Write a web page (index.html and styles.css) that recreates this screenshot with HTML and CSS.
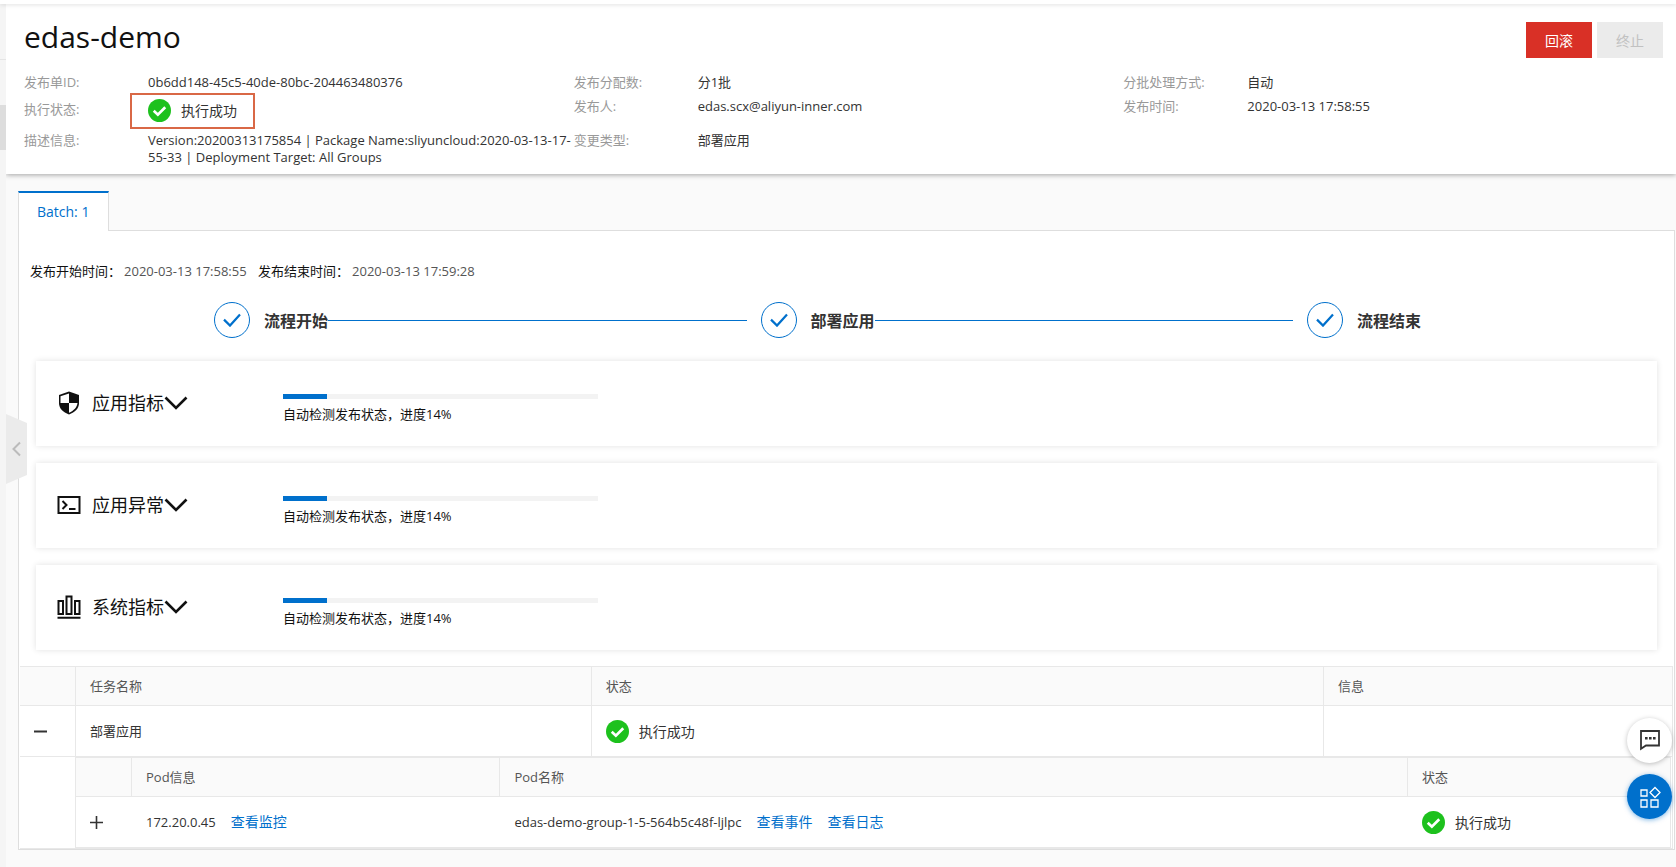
FILE: index.html
```
<!DOCTYPE html>
<html lang="zh-CN">
<head>
  <meta charset="UTF-8">
  <meta name="viewport" content="width=device-width, initial-scale=1.0">
  <title>edas-demo</title>
  <link rel="stylesheet" href="styles.css">
</head>
<body>
  <!-- shared icons -->
  <svg class="sprite" aria-hidden="true">
    <symbol id="icon-success" viewBox="0 0 24 24">
      <circle cx="12" cy="12" r="12" fill="#1dc11d"/>
      <path d="M6 12.2l4.3 4.2L18 8.6" fill="none" stroke="#fff" stroke-width="2.8"/>
    </symbol>
    <symbol id="icon-check" viewBox="0 0 18 14">
      <path d="M1 6.6l6 6L17 1.4" fill="none" stroke="#0070cc" stroke-width="2.2"/>
    </symbol>
    <symbol id="icon-down" viewBox="0 0 24 14">
      <path d="M1.5 1.5L12 12 22.5 1.5" fill="none" stroke="#111" stroke-width="2.6"/>
    </symbol>
  </svg>

  <div class="topbar"></div>
  <div class="layout">
    <aside class="rail">
      <div class="rail-head"></div>
      <div class="rail-active"></div>
      <button class="rail-toggle" aria-label="收起">
        <svg width="9" height="16" viewBox="0 0 9 16"><path d="M8 1.5L1.5 8 8 14.5" fill="none" stroke="#bbb" stroke-width="2"/></svg>
      </button>
    </aside>

    <main class="main">
      <header class="header">
        <div class="title-row">
          <h1>edas-demo</h1>
          <div class="actions">
            <button class="btn btn-danger">回滚</button>
            <button class="btn" disabled>终止</button>
          </div>
        </div>
        <dl class="info">
          <div class="item"><dt>发布单ID:</dt><dd>0b6dd148-45c5-40de-80bc-204463480376</dd></div>
          <div class="item"><dt>发布分配数:</dt><dd>分1批</dd></div>
          <div class="item"><dt>分批处理方式:</dt><dd>自动</dd></div>
          <div class="item item-status">
            <dt>执行状态:</dt>
            <dd><span class="status marked"><svg><use href="#icon-success"/></svg>执行成功</span></dd>
          </div>
          <div class="item"><dt>发布人:</dt><dd>edas.scx@aliyun-inner.com</dd></div>
          <div class="item"><dt>发布时间:</dt><dd>2020-03-13 17:58:55</dd></div>
          <div class="item"><dt>描述信息:</dt><dd>Version:20200313175854 | Package Name:sliyuncloud:2020-03-13-17-55-33 | Deployment Target: All Groups</dd></div>
          <div class="item"><dt>变更类型:</dt><dd>部署应用</dd></div>
        </dl>
      </header>

      <section class="content">
        <div class="tabs" role="tablist">
          <button class="tab" role="tab" aria-selected="true">Batch: 1</button>
        </div>
        <div class="panel">
          <p class="times">
            <span>发布开始时间：</span><time>2020-03-13 17:58:55</time>
            <span>发布结束时间：</span><time>2020-03-13 17:59:28</time>
          </p>

          <ol class="steps">
            <li class="step"><span class="step-icon"><svg><use href="#icon-check"/></svg></span><span class="step-name">流程开始</span></li>
            <li class="step"><span class="step-icon"><svg><use href="#icon-check"/></svg></span><span class="step-name">部署应用</span></li>
            <li class="step"><span class="step-icon"><svg><use href="#icon-check"/></svg></span><span class="step-name">流程结束</span></li>
          </ol>

          <div class="cards">
            <div class="card">
              <button class="card-title">
                <svg class="card-icon" viewBox="0 0 24 24">
                  <path d="M12 .5L22 4v8c0 5.500-4 9-10 11.500C6 21 2 17.500 2 12V4z" fill="#111"/>
                  <path d="M12 2.500v9.500H3.500V5.300zM12 12h8.500c-.5 4.500-3.500 7.500-8.500 9.800z" fill="#fff"/>
                </svg>
                应用指标<svg class="arrow"><use href="#icon-down"/></svg>
              </button>
              <div class="check">
                <div class="bar"><div class="bar-fill" style="width: 14%"></div></div>
                <p>自动检测发布状态，进度14%</p>
              </div>
            </div>
            <div class="card">
              <button class="card-title">
                <svg class="card-icon" viewBox="0 0 24 24" fill="none" stroke="#111" stroke-width="2">
                  <path d="M1.5 4h21v16h-21zM5.5 8l4 4-4 4M12 16h6.5"/>
                </svg>
                应用异常<svg class="arrow"><use href="#icon-down"/></svg>
              </button>
              <div class="check">
                <div class="bar"><div class="bar-fill" style="width: 14%"></div></div>
                <p>自动检测发布状态，进度14%</p>
              </div>
            </div>
            <div class="card">
              <button class="card-title">
                <svg class="card-icon" viewBox="0 0 24 24" fill="none" stroke="#111" stroke-width="2">
                  <path d="M1.5 6H6v13H1.5zM9.5 1.5h5V19h-5zM18 6h4.5v13H18zM.5 22.8h23"/>
                </svg>
                系统指标<svg class="arrow"><use href="#icon-down"/></svg>
              </button>
              <div class="check">
                <div class="bar"><div class="bar-fill" style="width: 14%"></div></div>
                <p>自动检测发布状态，进度14%</p>
              </div>
            </div>
          </div>

          <table class="table task-table">
            <colgroup><col class="col-toggle"><col class="col-task"><col class="col-status"><col></colgroup>
            <thead>
              <tr><th></th><th>任务名称</th><th>状态</th><th>信息</th></tr>
            </thead>
            <tbody>
              <tr>
                <td><button class="toggle" aria-label="收起"><svg viewBox="0 0 13 13"><path d="M0 6.5h13" stroke="#333" stroke-width="2"/></svg></button></td>
                <td>部署应用</td>
                <td><span class="status"><svg><use href="#icon-success"/></svg>执行成功</span></td>
                <td></td>
              </tr>
              <tr>
                <td></td>
                <td class="nested" colspan="3">
                  <table class="table pod-table">
                    <colgroup><col class="col-toggle"><col class="col-pod"><col class="col-name"><col></colgroup>
                    <thead>
                      <tr><th></th><th>Pod信息</th><th>Pod名称</th><th>状态</th></tr>
                    </thead>
                    <tbody>
                      <tr>
                        <td><button class="toggle" aria-label="展开"><svg viewBox="0 0 13 13"><path d="M0 6.5h13M6.5 0v13" stroke="#333" stroke-width="1.6"/></svg></button></td>
                        <td>172.20.0.45<a href="#">查看监控</a></td>
                        <td>edas-demo-group-1-5-564b5c48f-ljlpc<a href="#">查看事件</a><a href="#">查看日志</a></td>
                        <td><span class="status"><svg><use href="#icon-success"/></svg>执行成功</span></td>
                      </tr>
                    </tbody>
                  </table>
                </td>
              </tr>
            </tbody>
          </table>
        </div>
      </section>
    </main>
  </div>

  <div class="floats">
    <button class="float" aria-label="反馈">
      <svg width="22" height="24" viewBox="0 0 22 24">
        <path d="M2 2h18v14.500H7L2 19.800z" fill="none" stroke="#333" stroke-width="1.8"/>
        <path d="M6 8h2.600v2.600H6zM10 8h2.600v2.600H10zM14 8h2.600v2.600H14z" fill="#333"/>
      </svg>
    </button>
    <button class="float float-blue" aria-label="应用">
      <svg width="22" height="22" viewBox="0 0 22 22" fill="none" stroke="#fff" stroke-width="1.3">
        <path d="M2 4h6v6H2zM2 14h6v7H2zM12 14h7v7h-7zM16 1.5l5 5-5 5-5-5z"/>
      </svg>
    </button>
  </div>
</body>
</html>
```

FILE: styles.css
```
* {
  box-sizing: border-box;
}

body {
  margin: 0;
  min-height: 100vh;
  display: flex;
  flex-direction: column;
  font-family: "Open Sans", "Noto Sans CJK SC", sans-serif;
  font-size: 13px;
  line-height: 17px;
  color: #333;
  background-color: #fafafa;
}

h1, p, dl, dd, ol {
  margin: 0;
  padding: 0;
}

button {
  font: inherit;
  color: inherit;
  border: none;
  padding: 0;
  background: none;
  cursor: pointer;
}

a {
  font-size: 14px;
  color: #0070cc;
  text-decoration: none;
}

svg {
  flex: none;
}

.sprite {
  position: absolute;
  width: 0;
  height: 0;
}

.topbar {
  position: relative;
  z-index: 1;
  height: 4px;
  background-color: #fff;
  box-shadow: 0 1px 4px rgba(0, 0, 0, 0.12);
}

.layout {
  flex: 1;
  display: flex;
}

/* collapsed side menu */
.rail {
  position: relative;
  width: 6px;
  background-color: #f5f5f5;
}

.rail-head {
  height: 56px;
  margin-bottom: 45px;
  border-bottom: 1px solid #e5e5e5;
}

.rail-active {
  height: 45px;
  background-color: #ddd;
}

.rail-toggle {
  position: absolute;
  top: 410px;
  left: 6px;
  z-index: 1;
  display: flex;
  align-items: center;
  justify-content: center;
  width: 21px;
  height: 70px;
  background-color: #ebebeb;
  clip-path: polygon(0 0, 100% 13%, 100% 87%, 0 100%);
}

.main {
  flex: 1;
  min-width: 0;
}

/* header */
.header {
  padding: 12px 13px 8px 18px;
  background-color: #fff;
  box-shadow: 0 1px 5px rgba(0, 0, 0, 0.35);
}

.title-row {
  display: flex;
  justify-content: space-between;
  height: 58px;
}

h1 {
  font-size: 30px;
  line-height: 42px;
  font-weight: 400;
  color: #111;
}

.actions {
  display: flex;
  gap: 5px;
  padding-top: 6px;
}

.btn {
  width: 66px;
  height: 36px;
  font-size: 14px;
  color: #c1c1c1;
  background-color: #ebebeb;
}

.btn:disabled {
  cursor: not-allowed;
}

.btn-danger {
  color: #fff;
  background-color: #d93026;
}

.info {
  display: grid;
  grid-template-columns: repeat(3, 1fr);
  margin-right: -10px;
}

.item {
  display: flex;
  min-height: 24px;
}

.item dt {
  flex: none;
  width: 124px;
  color: #999;
}

.item-status {
  height: 34px;
  line-height: 23px;
}

.status {
  display: inline-flex;
  align-items: center;
  gap: 10px;
  font-size: 14px;
  vertical-align: middle;
}

.status svg {
  width: 23px;
  height: 23px;
}

.marked {
  position: relative;
}

.marked::after {
  content: "";
  position: absolute;
  inset: -6px -18px -7px;
  border: 2px solid #d96846;
}

/* tabs */
.content {
  padding: 17px 1px 17px 12px;
}

.tabs {
  display: flex;
}

.tab {
  height: 40px;
  margin-bottom: -1px;
  padding: 0 19px 2px 18px;
  font-size: 14px;
  color: #0070cc;
  background-color: #fff;
  border: 1px solid #dedede;
  border-top: 2px solid #0070cc;
  border-bottom: none;
  z-index: 1;
}

.panel {
  padding-top: 32px;
  background-color: #fff;
  border: 1px solid #dedede;
}

.times {
  padding: 0 11px;
  color: #111;
}

.times time {
  margin: 0 8px 0 3px;
  color: #555;
}

/* steps */
.steps {
  display: flex;
  padding: 22px 253px 23px 195px;
  list-style: none;
}

.step {
  display: flex;
  align-items: center;
}

.step:not(:last-child) {
  flex: 1;
}

.step:not(:last-child)::after {
  content: "";
  flex: 1;
  margin-right: 14px;
  border-top: 1px solid #0070cc;
}

.step-icon {
  display: flex;
  align-items: center;
  justify-content: center;
  width: 36px;
  height: 36px;
  margin-right: 14px;
  border: 1px solid #0070cc;
  border-radius: 50%;
}

.step-icon svg {
  width: 18px;
  height: 14px;
}

.step-name {
  padding-top: 3px;
  font-size: 16px;
  font-weight: 700;
}

/* cards */
.cards {
  display: grid;
  gap: 17px;
  padding: 0 17px 16px;
}

.card {
  display: flex;
  align-items: center;
  height: 85px;
  padding: 0 21px;
  color: #111;
  background-color: #fff;
  box-shadow: 0 0 6px rgba(0, 0, 0, 0.12);
}

.card-title {
  display: flex;
  align-items: center;
  width: 226px;
  padding-bottom: 2px;
  font-size: 18px;
  line-height: 24px;
}

.card-icon {
  width: 24px;
  height: 24px;
  margin-right: 11px;
}

.arrow {
  width: 24px;
  height: 14px;
}

.check {
  width: 315px;
  padding-top: 10px;
}

.bar {
  height: 5px;
  margin-bottom: 7px;
  background-color: #f3f3f3;
}

.bar-fill {
  height: 100%;
  background-color: #0070cc;
}

/* tables */
.table {
  table-layout: fixed;
  border-collapse: separate;
  border-spacing: 0;
  background-color: #fff;
  border-top: 1px solid #e8e8e8;
}

.task-table {
  width: calc(100% - 2px);
  margin-left: 1px;
}

.pod-table {
  width: calc(100% - 1px);
}

.table th,
.table td {
  padding: 0 14px;
  text-align: left;
  border-right: 1px solid #e8e8e8;
  border-bottom: 1px solid #e8e8e8;
}

.table th {
  height: 39px;
  font-weight: 400;
  color: #555;
  background-color: #fafafa;
}

.table td {
  height: 51px;
}

.table td.nested {
  padding: 0;
}

.pod-table td:not(:last-child) {
  border-right: none;
}

.table td a {
  margin-left: 15px;
}

.col-toggle {
  width: 56px;
}

.col-task {
  width: 31.2%;
}

.col-status {
  width: 44.3%;
}

.col-pod {
  width: 23.1%;
}

.col-name {
  width: 56.9%;
}

.toggle {
  display: flex;
}

.toggle svg {
  width: 13px;
  height: 13px;
}

/* floating buttons */
.floats {
  position: fixed;
  right: 4px;
  bottom: 48px;
  display: grid;
  gap: 11px;
}

.float {
  display: flex;
  align-items: center;
  justify-content: center;
  width: 45px;
  height: 45px;
  border-radius: 50%;
  background-color: #fff;
  box-shadow: 0 1px 5px rgba(0, 0, 0, 0.25);
}

.float-blue {
  background-color: #0070cc;
  box-shadow: 0 1px 5px rgba(0, 112, 204, 0.5);
}
```
